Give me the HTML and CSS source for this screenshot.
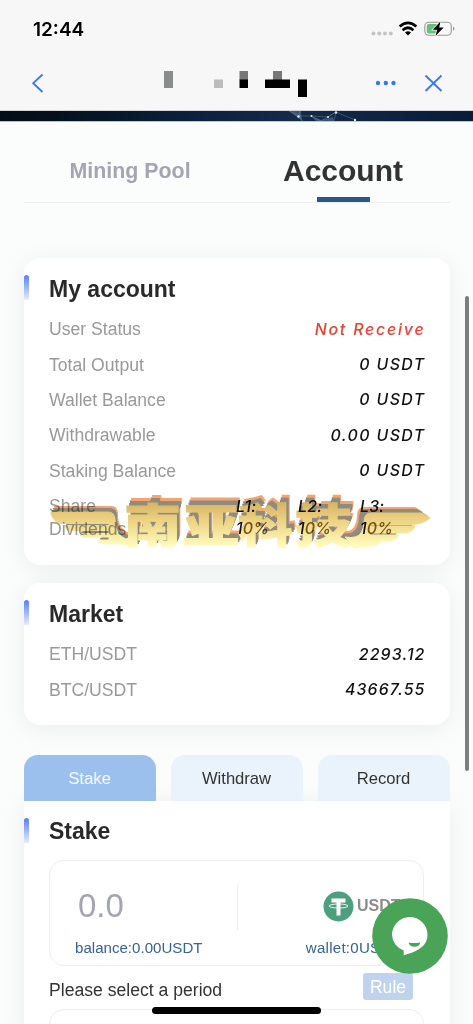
FILE: index.html
```html
<!DOCTYPE html>
<html lang="en">
<head>
<meta charset="utf-8">
<title>Account</title>
<link rel="stylesheet" href="styles.css">
</head>
<body>
<main class="screen">
  <header class="top">
    <div class="status">
      <span class="clock">12:44</span>
      <svg class="status-icons" width="86" height="20" viewBox="0 0 86 20">
        <g fill="#c4c4c4"><circle cx="3.500" cy="14.500" r="2"/><circle cx="9.300" cy="14.500" r="2"/><circle cx="15" cy="14.500" r="2"/><circle cx="20.800" cy="14.500" r="2"/></g>
        <g fill="none" stroke="#000" stroke-width="2.800"><path d="M29.700 7.500Q38 .2 46.300 7.500"/><path d="M32.600 11.200Q38 6.200 43.400 11.200"/></g>
        <path d="M35 13.500Q38 11 41 13.500L38 16.500Z"/>
        <rect x="54.800" y="3.200" width="26.500" height="13" rx="4" fill="#f7f7f7" stroke="#999" stroke-width="1.100"/>
        <path d="M58.800 5H67V14.500H58.800Q56.800 14.500 56.800 12.500V7Q56.800 5 58.800 5Z" fill="#67bf7b"/>
        <path d="M83 7.500Q86 9.700 83 12Z" fill="#999"/>
        <path d="M70.400 2.500L62.800 10.700H67.200L65.500 17L73.700 8.400H69.200Z" stroke="#f7f7f7" stroke-width="1.500" paint-order="stroke"/>
      </svg>
    </div>
    <div class="nav">
      <svg width="473" height="46" viewBox="0 0 473 46">
        <path d="M42.500 10.500L33.200 19.200L42.500 28" fill="none" stroke="#3478f6" stroke-width="1.800"/>
        <path d="M164 7h9v17h-9z" fill="#8b8d8c"/><path d="M214 15.500h9V24h-9z" fill="#bcbcbc"/>
        <path d="M239.500 7h8.500v9h-8.500zM273 7h9v9h-9z" fill="#777"/>
        <path d="M239.500 15.500h8.500V24h-8.500zM265 15.500h25V24h-25zM298 15.500h9V33h-9z"/>
        <g fill="#3478f6"><circle cx="378" cy="19" r="2.200"/><circle cx="385.800" cy="19" r="2.200"/><circle cx="393.500" cy="19" r="2.200"/></g>
        <path d="M425.500 11.500L441.500 27M441.500 11.500L425.500 27" stroke="#3478f6" stroke-width="1.800"/>
      </svg>
    </div>
  </header>
  <svg class="banner" width="473" height="11" viewBox="0 0 473 11">
    <defs><linearGradient id="night"><stop offset="0" stop-color="#030d18"/><stop offset=".12" stop-color="#04111d"/><stop offset=".4" stop-color="#0b203c"/><stop offset=".62" stop-color="#142a48"/><stop offset="1" stop-color="#081c38"/></linearGradient></defs>
    <path d="M0 0H473V10.300H0Z" fill="url(#night)"/>
    <path d="M289 0L302 10L301 0ZM311 5L321 9L333 6L334 10H316Z" fill="#6c8ba9" opacity=".45"/>
    <path d="M289 0L299 5L311 5L328 6L336 1L334 10M300 0L299 5L303 10M311 5L321 10L336 1L355 9" fill="none" stroke="#7892ae" stroke-width=".4"/>
    <g fill="#d9edff"><circle cx="298.500" cy="5.500" r="1.200"/><circle cx="311.500" cy="5" r="1"/><circle cx="328" cy="6" r="1"/><circle cx="336" cy="1.500" r="1.200"/><circle cx="355" cy="9" r="1.200"/></g>
  </svg>
  <nav class="pages"><span class="page">Mining Pool</span><span class="page page-on">Account</span></nav>

  <section class="card account">
    <h2>My account</h2>
    <div class="row"><span>User Status</span><b class="red">Not Receive</b></div>
    <div class="row"><span>Total Output</span><b>0 USDT</b></div>
    <div class="row"><span>Wallet Balance</span><b>0 USDT</b></div>
    <div class="row"><span>Withdrawable</span><b>0.00 USDT</b></div>
    <div class="row"><span>Staking Balance</span><b>0 USDT</b></div>
    <div class="row share"><span>Share Dividends</span><b>L1:<br>1<em>0%</em></b><b>L2:<br>1<em>0%</em></b><b>L3:<br>1<em>0%</em></b></div>
    <svg class="mark" width="390" height="60" viewBox="45 490 390 60">
      <defs>
        <linearGradient id="gold" gradientUnits="userSpaceOnUse" x1="0" y1="502" x2="0" y2="545"><stop offset="0" stop-color="#d6b160"/><stop offset=".4" stop-color="#ecd07c"/><stop offset="1" stop-color="#fffbb9"/></linearGradient>
        <path id="wingL" d="M51 512H108Q115 512 115 520Q115 535 126 539L132 536V544Q128 546 123 544H105Q99 544 99 540H109V537H85Q80 537 80 533.500H109V530.500H71Q65 530 65 525.500H109V523.500H60Q52 521 51 512Z"/>
        <path id="wingR" d="M430 518Q423 524 412 524.500H370V526H415Q413 532 406 533H370V535H399Q396 540 389 540.500H368V541.500H381Q378 546 369 546L356 548Q348 547 350 542L345 537Q357 539 361 533Q364 528 364 522Q364 513 371 513H422Z"/>
        <g id="name" font-family="Noto Sans CJK SC, sans-serif" font-weight="900" font-size="46">
          <text x="124" y="541" textLength="57" lengthAdjust="spacingAndGlyphs">南</text><text x="183" y="541" textLength="56" lengthAdjust="spacingAndGlyphs">亚</text><text x="238" y="541" textLength="55" lengthAdjust="spacingAndGlyphs">科</text><text x="295" y="541" textLength="57" lengthAdjust="spacingAndGlyphs">技</text>
        </g>
      </defs>
      <g fill="#f5a06a"><use href="#name" x="4" y="-7"/><use href="#name" x="3" y="-5"/><use href="#wingL" x="3" y="-6"/><use href="#wingR" x="-7" y="-6"/></g>
      <g fill="#8a8678"><use href="#name" x="3" y="-4"/><use href="#name" x="2" y="-2"/><use href="#wingL" x="2" y="-4"/><use href="#wingL" x="1" y="-2"/><use href="#wingR" x="-5" y="-4"/><use href="#wingR" x="-2" y="-2"/></g>
      <g fill="url(#gold)" stroke="url(#gold)" stroke-width="1"><use href="#name" y="1"/><use href="#wingL"/><use href="#wingR"/></g>
    </svg>
  </section>

  <section class="card market">
    <h2>Market</h2>
    <div class="row"><span>ETH/USDT</span><b class="num">2293.12</b></div>
    <div class="row"><span>BTC/USDT</span><b class="num">43667.55</b></div>
  </section>

  <div class="tabs"><span class="tab tab-on">Stake</span><span class="tab">Withdraw</span><span class="tab">Record</span></div>
  <section class="card stake">
    <h2>Stake</h2>
    <div class="box">
      <div class="amount">
        <span class="zero">0.0</span><i class="divider"></i>
        <span class="coin"><svg width="31" height="31" viewBox="0 0 31 31"><circle cx="15.500" cy="15.500" r="15" fill="#4d9f7f"/><path d="M8.500 7.500H22.500V11.500H17.500V24.500H13.500V11.500H8.500Z" fill="#fff"/><ellipse cx="15.500" cy="15" rx="9.500" ry="2" fill="none" stroke="#fff" stroke-width=".9"/></svg>USDT</span>
      </div>
      <div class="balances"><span>balance:0.00USDT</span><span>wallet:0USDT</span></div>
    </div>
    <div class="period"><span>Please select a period</span><span class="rule">Rule</span></div>
    <div class="box box-next"></div>
  </section>
  <svg class="chat" width="76" height="76" viewBox="0 0 76 76"><circle cx="38" cy="38" r="37.800" fill="#4aa457"/><path d="M37.500 19A17.800 17.800 0 0 1 55.500 37C55.500 48 45 54 31.700 57.200V52.600A17.500 17.500 0 0 1 20 37A17.800 17.800 0 0 1 37.500 19Z" fill="#fff"/><path d="M36.500 44.500Q42 45.500 48.300 44.500Q47.500 48.700 42.500 48.700Q37.500 48.700 36.500 44.500Z" fill="#4aa457"/></svg>
  <i class="scrollbar"></i>
  <i class="home"></i>
</main>
</body>
</html>
```
FILE: styles.css
```css
* { box-sizing: border-box; }
body { margin: 0; font-family: "Liberation Sans", Arial, sans-serif; color: #333; }
.screen { position: relative; width: 473px; height: 1024px; overflow: hidden; background: #fbfdfc; }
.top { height: 111px; background: #f7f7f7; border-bottom: 1px solid #d4d4d4; }
.status { height: 64px; display: flex; justify-content: space-between; align-items: flex-start; padding: 19px 17px 0 33px; }
.clock { font: 600 19px/21px Inter, sans-serif; color: #000; }
.nav, .nav svg, .banner { display: block; }
.pages { display: flex; height: 81px; margin: 0 23.5px; border-bottom: 1px solid #eee; }
.page { flex: 1; text-align: center; font-weight: 700; font-size: 21.4px; line-height: 98px; color: #a5a4b3; }
.page-on { position: relative; font-size: 30px; line-height: 98px; color: #333; }
.page-on::after { content: ""; position: absolute; left: 80px; top: 75px; width: 53px; height: 5px; background: #2c5789; }
.card { position: relative; width: 426px; margin: 0 23.5px; padding: 0 25.5px; background: #fff; border-radius: 16px; box-shadow: 0 4px 24px rgba(0, 0, 0, .065); }
.account { height: 307px; margin-top: 55px; }
.market { height: 142px; margin-top: 18px; }
.card h2 { margin: 0; padding-top: 17px; font-size: 23px; line-height: 28px; color: #292929; }
.card::before { content: ""; position: absolute; left: 0; top: 17px; width: 5px; height: 25px; border-radius: 3px 3px 0 0; background: linear-gradient(#557ff2, #e6eefb); }
.row { display: flex; justify-content: space-between; align-items: center; height: 35.4px; font-size: 17.6px; color: #999; }
.account h2, .market h2 { height: 54px; }
.row b { margin-right: -1.5px; font: italic 500 15.9px/22px Inter, sans-serif; letter-spacing: 1.4px; color: #111; }
.row b.red { color: #ee402f; letter-spacing: 1.8px; }
.row b.num { letter-spacing: 1.1px; }
.share { height: 46px; justify-content: flex-start; margin-top: 6px; line-height: 22.5px; }
.row.share b { margin: 0; width: 62px; letter-spacing: .2px; line-height: 22px; }
.share em { color: #80601d; }
.share span { width: 187px; padding-right: 100px; }
.mark { position: absolute; left: 21.5px; top: 232px; opacity: .96; mix-blend-mode: multiply; }
.tabs { display: flex; gap: 15px; margin: 30px 23.5px 0; }
.tab { position: relative; z-index: 1; flex: 1; height: 46px; border-radius: 14px 14px 0 0; background: #eaf2fc; text-align: center; font-size: 16.6px; line-height: 48px; }
.tab-on { background: #9bc0ed; color: #f3f8ff; }
.stake { height: 240px; border-radius: 0; }
.stake h2 { height: 59px; padding-top: 16px; }
.box { height: 106px; border: 1px solid #eee; border-radius: 15px; padding: 22px 25px 0; }
.amount { display: flex; align-items: center; height: 46px; }
.zero { width: 162px; padding: 0 0 0 3px; font-size: 33px; color: #a5a4b3; }
.divider { flex: none; width: 1px; height: 45px; margin: 3px 0 0 0; background: #eee; }
.zero { flex: none; }
.coin { flex: none; display: flex; align-items: center; gap: 3px; margin-left: 85px; font-weight: 700; font-size: 16px; color: #8c8c8c; }
.balances { display: flex; justify-content: space-between; margin: 9px -1px 0 0; font-size: 15.1px; line-height: 20px; color: #376395; }
.balances span + span { margin-right: -2px; letter-spacing: .25px; }
.period { display: flex; justify-content: space-between; align-items: center; height: 43px; padding-top: 6px; font-size: 17.6px; }
.rule { width: 50px; height: 27px; margin: -8px 11px 0 0; border-radius: 3px; background: #bfd3ef; color: #fff; text-align: center; line-height: 28px; }
.chat { position: absolute; left: 372px; top: 898px; }
.scrollbar { position: absolute; left: 465px; top: 296px; width: 4px; height: 475px; border-radius: 2px; background: #7d7e7e; }
.home { position: absolute; left: 152px; top: 1007px; width: 169px; height: 7px; border-radius: 4px; background: #000; }
```
